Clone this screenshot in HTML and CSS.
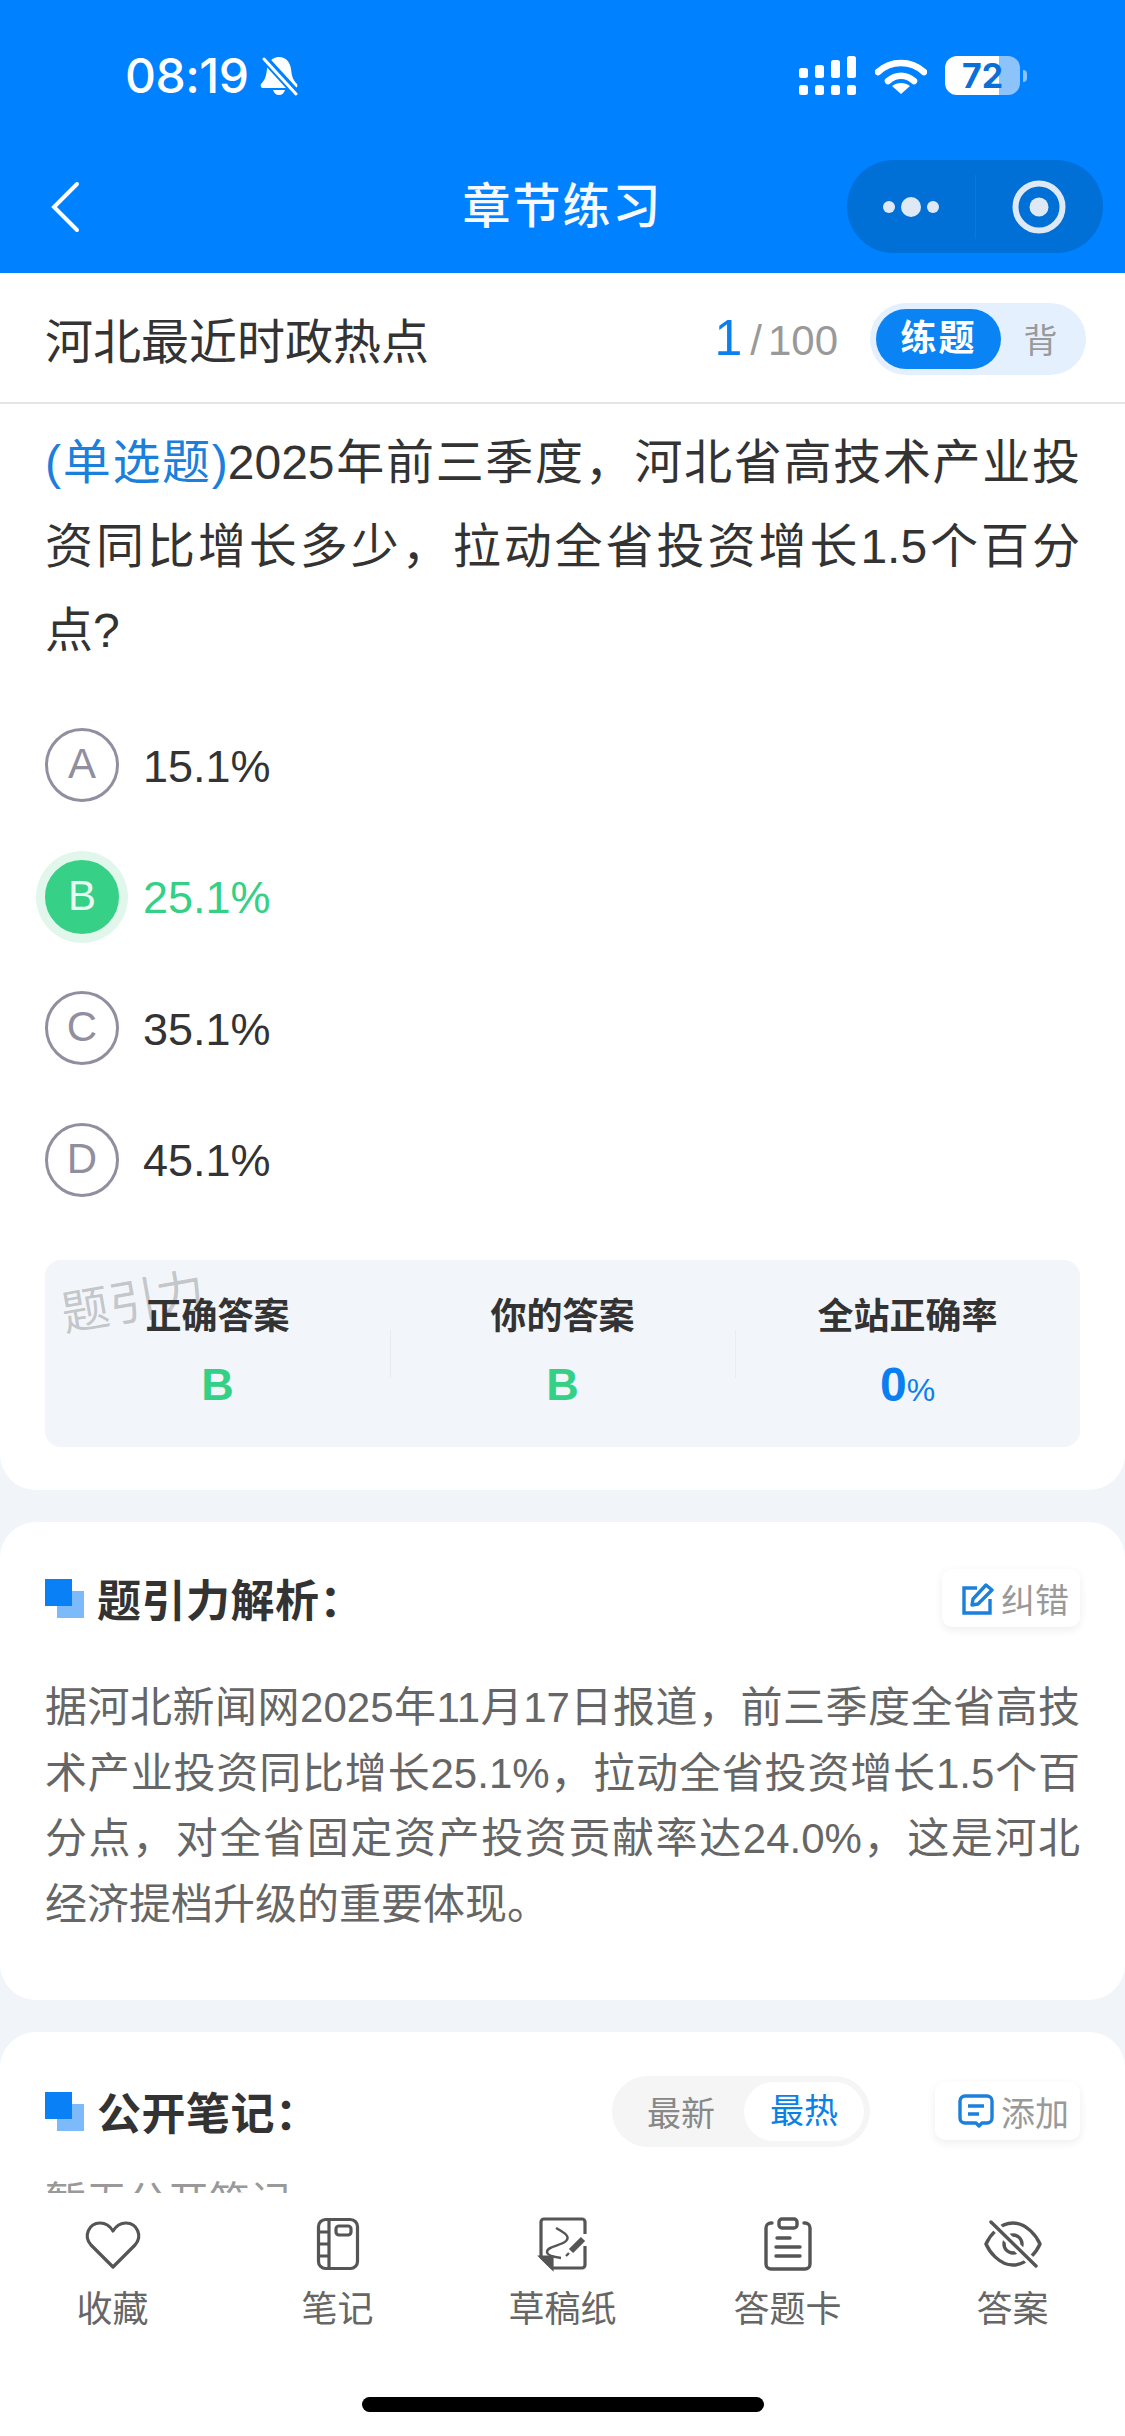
FILE: index.html
```html
<!DOCTYPE html>
<html lang="zh-CN">
<head>
    <meta charset="UTF-8">
    <meta name="viewport" content="width=device-width, initial-scale=1.0">
    <title>章节练习</title>
    <link rel="stylesheet" href="styles.css">
</head>
<body>
    <div class="page">
        <header class="top">
            <div class="status">
                <div class="status-left">
                    <span class="time">08:19</span>
                    <svg class="bell" width="38" height="40" viewBox="0 0 38 40">
                        <path d="M19 1c7 0 11 5 12 12 1 8 2 11 6 15 1 2 0 4-2 4H3c-2 0-3-2-2-4 4-4 5-7 6-15C8 6 12 1 19 1z" fill="#fff"/>
                        <path d="M13 34h12c-1 3-3 5-6 5s-5-2-6-5z" fill="#fff"/>
                        <path d="M3 1l33 36" stroke="#0081ff" stroke-width="8"/>
                        <path d="M4 3l32 35" stroke="#fff" stroke-width="3" stroke-linecap="round"/>
                    </svg>
                </div>
                <div class="status-right">
                    <svg width="58" height="40" viewBox="0 0 58 40" fill="#fff">
                        <rect x="0" y="12" width="9" height="10" rx="2.5"/>
                        <rect x="16" y="9" width="9" height="13" rx="2.5"/>
                        <rect x="32" y="4" width="9" height="18" rx="2.5"/>
                        <rect x="48" y="0" width="9" height="22" rx="2.5"/>
                        <rect x="0" y="29" width="9" height="10" rx="2.5"/>
                        <rect x="16" y="29" width="9" height="10" rx="2.5"/>
                        <rect x="32" y="29" width="9" height="10" rx="2.5"/>
                        <rect x="48" y="29" width="9" height="10" rx="2.5"/>
                    </svg>
                    <svg class="wifi" width="52" height="38" viewBox="0 0 52 38">
                        <path d="M3 15C16 3 36 3 49 15" fill="none" stroke="#fff" stroke-width="6.5" stroke-linecap="round"/>
                        <path d="M13 24c8-7 18-7 26 0" fill="none" stroke="#fff" stroke-width="6.5" stroke-linecap="round"/>
                        <path d="M26 37l-9-8c5-4 13-4 18 0z" fill="#fff"/>
                    </svg>
                    <div class="battery">
                        <div class="battery-body"><span>72</span></div>
                        <div class="battery-nub"></div>
                    </div>
                </div>
            </div>
            <nav class="nav">
                <svg class="back" width="30" height="52" viewBox="0 0 30 52">
                    <path d="M27 3L4 26l23 23" fill="none" stroke="#fff" stroke-width="4" stroke-linecap="round"/>
                </svg>
                <div class="nav-title">章节练习</div>
                <div class="capsule">
                    <div class="capsule-part">
                        <svg width="70" height="24" viewBox="0 0 70 24" fill="#dfe9f5">
                            <circle cx="13" cy="12" r="6"/>
                            <circle cx="35" cy="12" r="10"/>
                            <circle cx="57" cy="12" r="6"/>
                        </svg>
                    </div>
                    <div class="capsule-line"></div>
                    <div class="capsule-part">
                        <svg width="54" height="54" viewBox="0 0 54 54">
                            <circle cx="27" cy="27" r="23.5" fill="none" stroke="#dfe9f5" stroke-width="6"/>
                            <circle cx="27" cy="27" r="9.5" fill="#dfe9f5"/>
                        </svg>
                    </div>
                </div>
            </nav>
        </header>

        <div class="subhead">
            <div class="subhead-title">河北最近时政热点</div>
            <div class="progress"><span class="progress-now">1</span><span class="progress-sep">/</span><span>100</span></div>
            <div class="mode">
                <span class="mode-on">练题</span>
                <span class="mode-off">背</span>
            </div>
        </div>

        <main class="scroll">
            <section class="card card-question">
                <p class="question"><span class="question-type">(单选题)</span>2025年前三季度，河北省高技术产业投资同比增长多少，拉动全省投资增长1.5个百分点?</p>
                <div class="options">
                    <div class="option"><span class="letter">A</span><span class="option-text">15.1%</span></div>
                    <div class="option option-right"><span class="letter">B</span><span class="option-text">25.1%</span></div>
                    <div class="option"><span class="letter">C</span><span class="option-text">35.1%</span></div>
                    <div class="option"><span class="letter">D</span><span class="option-text">45.1%</span></div>
                </div>
                <div class="stats">
                    <div class="watermark">题引力</div>
                    <div class="stat">
                        <div class="stat-label">正确答案</div>
                        <div class="stat-value green">B</div>
                    </div>
                    <div class="stat">
                        <div class="stat-label">你的答案</div>
                        <div class="stat-value green">B</div>
                    </div>
                    <div class="stat">
                        <div class="stat-label">全站正确率</div>
                        <div class="stat-value blue">0<small>%</small></div>
                    </div>
                </div>
            </section>

            <section class="card card-analysis">
                <div class="card-head">
                    <div class="mark"><i></i><b></b></div>
                    <h2>题引力解析：</h2>
                    <div class="mini-btn">
                        <svg width="32" height="33" viewBox="0 0 32 33" fill="none" stroke="#1b7fdc" stroke-width="3.4">
                            <path d="M15 6H2v25h26V17"/>
                            <path d="M10 23l1-6L24 3l6 5-14 14z" stroke-linejoin="round"/>
                        </svg>
                        <span>纠错</span>
                    </div>
                </div>
                <p class="analysis">据河北新闻网2025年11月17日报道，前三季度全省高技术产业投资同比增长25.1%，拉动全省投资增长1.5个百分点，对全省固定资产投资贡献率达24.0%，这是河北经济提档升级的重要体现。</p>
            </section>

            <section class="card card-notes">
                <div class="card-head">
                    <div class="mark"><i></i><b></b></div>
                    <h2>公开笔记：</h2>
                    <div class="sort">
                        <span class="sort-off">最新</span>
                        <span class="sort-on">最热</span>
                    </div>
                    <div class="mini-btn">
                        <svg width="36" height="34" viewBox="0 0 36 34" fill="none" stroke="#1b7fdc" stroke-width="3.4">
                            <path d="M7 2h22a5 5 0 0 1 5 5v17a5 5 0 0 1-5 5h-5l-3 3-3-3H7a5 5 0 0 1-5-5V7a5 5 0 0 1 5-5z" stroke-linejoin="round"/>
                            <path d="M10 12h16M10 20h11"/>
                        </svg>
                        <span>添加</span>
                    </div>
                </div>
                <p class="empty">暂无公开笔记</p>
            </section>
        </main>

        <footer class="tabbar">
            <div class="tabs">
                <div class="tab">
                    <svg width="60" height="60" viewBox="0 0 60 60" fill="none" stroke="#555" stroke-width="3.2" stroke-linejoin="round">
                        <path d="M30 55L8 33C0 24 6 11 17 11c6 0 10 3 13 8 3-5 7-8 13-8 11 0 17 13 9 22z"/>
                    </svg>
                    <span>收藏</span>
                </div>
                <div class="tab">
                    <svg width="60" height="60" viewBox="0 0 60 60" fill="none" stroke="#555" stroke-width="3.2">
                        <rect x="10.5" y="7.5" width="39" height="49" rx="7"/>
                        <path d="M21 7.5v49M10.5 20h10.5M10.5 32h10.5M10.5 44h10.5"/>
                        <rect x="28" y="14" width="15" height="9" rx="3"/>
                    </svg>
                    <span>笔记</span>
                </div>
                <div class="tab">
                    <svg width="60" height="60" viewBox="0 0 60 60" fill="none" stroke="#555" stroke-width="3.2">
                        <path d="M52 22V10a3 3 0 0 0-3-3H11a3 3 0 0 0-3 3v35l11 11h30a3 3 0 0 0 3-3V34"/>
                        <path d="M8 45h11v11z" fill="#555"/>
                        <path d="M23 16c7 4 15 8 10 13-5 5-19 5-19 11 0 3 7 5 14 6" stroke-width="2.4"/>
                        <path d="M50 27L38 39" stroke-width="6"/>
                        <path d="M36 41l-3 3" stroke-width="2.4"/>
                    </svg>
                    <span>草稿纸</span>
                </div>
                <div class="tab">
                    <svg width="60" height="60" viewBox="0 0 60 60" fill="none" stroke="#555" stroke-width="3.4" stroke-linecap="round">
                        <rect x="21" y="7" width="18" height="9" rx="3"/>
                        <path d="M14 11h-1a5 5 0 0 0-5 5v36a5 5 0 0 0 5 5h34a5 5 0 0 0 5-5V16a5 5 0 0 0-5-5h-1"/>
                        <path d="M19 26h13M18 35h24M18 44h24"/>
                    </svg>
                    <span>答题卡</span>
                </div>
                <div class="tab">
                    <svg width="60" height="60" viewBox="0 0 60 60" fill="none" stroke="#555" stroke-width="3.4" stroke-linecap="round">
                        <path d="M3 32C6 25 16 11 30 11s24 14 27 21c-3 7-13 21-27 21S6 39 3 32z"/>
                        <circle cx="30" cy="32" r="9"/>
                        <path d="M8 10l45 44" stroke="#fff" stroke-width="9"/>
                        <path d="M8 10l45 44"/>
                    </svg>
                    <span>答案</span>
                </div>
            </div>
            <div class="home-bar"></div>
        </footer>
    </div>
</body>
</html>
```

FILE: styles.css
```css
html, body {
    margin: 0;
    padding: 0;
}

body {
    font-family: "Liberation Sans", "Noto Sans CJK SC", sans-serif;
    color: #333;
    background-color: #f1f5f9;
}

.page {
    width: 1125px;
    height: 2436px;
    display: flex;
    flex-direction: column;
    overflow: hidden;
}

/* blue top area */
.top {
    height: 273px;
    flex-shrink: 0;
    background-color: #0081ff;
    color: #fff;
    box-sizing: border-box;
}

.status {
    height: 160px;
    box-sizing: border-box;
    padding: 56px 98px 0 125px;
    display: flex;
    justify-content: space-between;
    align-items: flex-start;
}

.status-left {
    display: flex;
    align-items: center;
    gap: 12px;
}

.time {
    font-family: Inter, sans-serif;
    font-weight: 500;
    font-size: 48px;
    line-height: 40px;
    letter-spacing: -0.5px;
}

.status-right {
    display: flex;
    align-items: flex-start;
    gap: 18px;
}

.wifi {
    margin-top: 1px;
}

.battery {
    display: flex;
    align-items: center;
    gap: 3px;
}

.battery-body {
    width: 75px;
    height: 39px;
    border-radius: 12px;
    background: linear-gradient(90deg, #fff 0, #fff 54px, #8cc3fb 54px, #8cc3fb 100%);
    color: #0a70d8;
    font-family: Inter, sans-serif;
    font-weight: 700;
    font-size: 34px;
    line-height: 39px;
    text-align: center;
}

.battery-nub {
    width: 4px;
    height: 12px;
    border-radius: 0 6px 6px 0;
    background-color: #8cc3fb;
}

.nav {
    height: 93px;
    padding: 0 22px;
    display: grid;
    grid-template-columns: 1fr auto 1fr;
    align-items: center;
}

.back {
    margin-left: 28px;
}

.nav-title {
    font-size: 48px;
    font-weight: 500;
    letter-spacing: 2px;
    line-height: 93px;
    color: #f6faff;
}

.capsule {
    justify-self: end;
    width: 256px;
    height: 93px;
    border-radius: 47px;
    background-color: #0070d6;
    display: flex;
    align-items: center;
}

.capsule-part {
    flex: 1;
    display: flex;
    justify-content: center;
    align-items: center;
}

.capsule-line {
    width: 1px;
    height: 64px;
    background-color: #0a78de;
}

/* sub header */
.subhead {
    height: 131px;
    flex-shrink: 0;
    box-sizing: border-box;
    padding: 0 39px 0 45px;
    background-color: #fff;
    border-bottom: 2px solid #e4e4e4;
    display: flex;
    align-items: center;
}

.subhead-title {
    font-size: 48px;
    color: #333;
    flex: 1;
}

.progress {
    font-size: 42px;
    color: #999;
    display: flex;
    align-items: baseline;
    margin-right: 32px;
}

.progress-now {
    font-size: 50px;
    color: #0c80ee;
}

.progress-sep {
    margin: 0 6px 0 8px;
}

.mode {
    width: 216px;
    height: 72px;
    box-sizing: border-box;
    padding: 6px;
    margin-top: 2px;
    border-radius: 36px;
    background-color: #e4f0fd;
    display: flex;
    align-items: center;
}

.mode-on {
    width: 125px;
    height: 60px;
    border-radius: 30px;
    background-color: #0a84f4;
    color: #fff;
    font-size: 36px;
    font-weight: 700;
    line-height: 60px;
    letter-spacing: 2px;
    text-align: center;
}

.mode-off {
    flex: 1;
    font-size: 34px;
    color: #999;
    text-align: center;
}

/* scrolling content */
.scroll {
    flex: 1;
    min-height: 0;
    overflow: hidden;
    display: flex;
    flex-direction: column;
    gap: 32px;
}

.card {
    flex-shrink: 0;
    background-color: #fff;
    border-radius: 36px;
    box-sizing: border-box;
    padding: 0 45px;
}

.card-question {
    height: 1086px;
    border-radius: 0 0 36px 36px;
    padding-top: 17px;
}

.question {
    margin: 0;
    font-size: 48px;
    line-height: 84px;
    text-align: justify;
    color: #333;
}

.question-type {
    color: #1a80dc;
}

.options {
    margin-top: 55px;
    display: flex;
    flex-direction: column;
    gap: 57.5px;
}

.option {
    display: flex;
    align-items: center;
    gap: 24px;
    height: 74px;
    font-size: 45px;
    color: #333;
}

.option-text {
    padding-top: 3px;
}

.letter {
    width: 74px;
    height: 74px;
    box-sizing: border-box;
    border: 3px solid #8f8f9f;
    border-radius: 50%;
    color: #8f8f9f;
    font-size: 42px;
    line-height: 66px;
    text-align: center;
}

.option-right {
    color: #34d086;
}

.option-right .letter {
    border-color: #36d086;
    background-color: #36d086;
    color: #eafaf2;
    box-shadow: 0 0 0 9px #e2f7ec;
}

.stats {
    position: relative;
    margin-top: 63px;
    height: 187px;
    border-radius: 16px;
    background-color: #f2f5f9;
    display: flex;
}

.watermark {
    position: absolute;
    left: 16px;
    top: 18px;
    font-size: 48px;
    line-height: 50px;
    color: rgba(0, 0, 0, 0.2);
    transform: rotate(-10deg);
}

.stat {
    flex: 1;
    position: relative;
    text-align: center;
    padding-top: 32px;
}

.stat + .stat::before {
    content: "";
    position: absolute;
    left: 0;
    top: 70px;
    height: 48px;
    width: 1px;
    background-color: #e9edf2;
}

.stat-label {
    font-size: 36px;
    font-weight: 700;
    line-height: 50px;
    color: #333;
}

.stat-value {
    margin-top: 17px;
    font-size: 45px;
    font-weight: 700;
    line-height: 52px;
}

.stat-value small {
    font-size: 32px;
    font-weight: 400;
}

.green {
    color: #34d086;
}

.blue {
    color: #0a80f0;
    font-size: 48px;
}

.card-analysis {
    height: 478px;
    padding-top: 47px;
}

.card-notes {
    height: 300px;
    padding-top: 50px;
}

.card-head {
    display: flex;
    align-items: center;
    height: 58px;
}

.card-head h2 {
    margin: 0 auto 0 13px;
    font-size: 44px;
    font-weight: 700;
    letter-spacing: 0.5px;
    color: #333;
}

.mark {
    position: relative;
    width: 39px;
    height: 39px;
}

.mark i {
    position: relative;
    z-index: 1;
    display: block;
    width: 27px;
    height: 27px;
    background-color: #0a80f6;
}

.mark b {
    position: absolute;
    right: 0;
    bottom: 0;
    width: 27px;
    height: 27px;
    background-color: #7dbafa;
}

.mini-btn {
    height: 58px;
    box-sizing: border-box;
    padding: 0 11px 0 20px;
    border-radius: 10px;
    background-color: #fff;
    box-shadow: 0 3px 10px rgba(0, 0, 0, 0.07);
    display: flex;
    align-items: center;
    gap: 7px;
    font-size: 34px;
    color: #999;
}

.card-notes .mini-btn {
    padding-left: 23px;
}

.analysis {
    margin: 48px 0 0;
    font-size: 42px;
    line-height: 65.6px;
    text-align: justify;
    color: #666;
}

.sort {
    width: 258px;
    height: 71px;
    box-sizing: border-box;
    padding: 6px;
    margin-right: 65px;
    border-radius: 36px;
    background-color: #f5f5f5;
    display: flex;
    align-items: center;
    font-size: 34px;
}

.sort-off {
    flex: 1;
    color: #888;
    text-align: center;
}

.sort-on {
    width: 120px;
    height: 59px;
    line-height: 59px;
    border-radius: 30px;
    background-color: #fff;
    color: #0a80e8;
    text-align: center;
}

.empty {
    margin: 32px 0 0;
    font-size: 41px;
    line-height: 60px;
    color: #999;
}

/* bottom tabs */
.tabbar {
    height: 243px;
    flex-shrink: 0;
    box-sizing: border-box;
    background-color: #fff;
    padding-top: 19px;
    display: flex;
    flex-direction: column;
    align-items: center;
}

.tabs {
    width: 100%;
    display: grid;
    grid-template-columns: repeat(5, 1fr);
}

.tab {
    display: flex;
    flex-direction: column;
    align-items: center;
    font-size: 36px;
    line-height: 50px;
    color: #666;
}

.tab span {
    margin-top: 13px;
}

.home-bar {
    width: 402px;
    height: 15px;
    margin-top: 62px;
    border-radius: 8px;
    background-color: #000;
}
```
